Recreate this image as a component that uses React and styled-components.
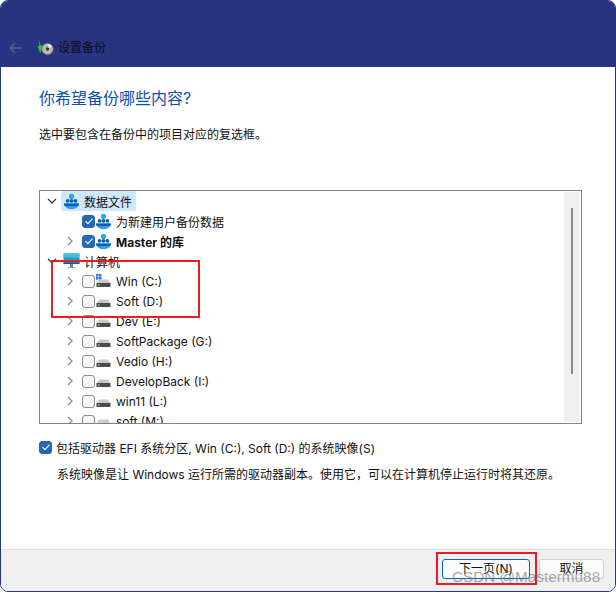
import React from "react";
import styled, { createGlobalStyle } from "styled-components";

const Global = createGlobalStyle`
  html, body { margin: 0; padding: 0; background: #fff; }
  body { font-family: Inter, "Noto Sans CJK SC", sans-serif; font-size: 12px; }
  * { box-sizing: border-box; }
`;

const drives = [
  { name: "Win (C:)", win: true },
  { name: "Soft (D:)" },
  { name: "Dev (E:)" },
  { name: "SoftPackage (G:)" },
  { name: "Vedio (H:)" },
  { name: "DevelopBack (I:)" },
  { name: "win11 (L:)" },
  { name: "soft (M:)" },
];

const Chevron = ({ open, hidden }) => (
  <ChevronBox $hidden={hidden}>
    <svg width="10" height="10" viewBox="0 0 10 10" fill="none" stroke={open ? "#333" : "#8c8c8c"} strokeWidth="1.2">
      <path d={open ? "M1 3l4 4 4-4" : "M3 1l4 4-4 4"} />
    </svg>
  </ChevronBox>
);

const Check = ({ checked }) => (
  <CheckBox $checked={checked}>
    {checked && (
      <svg width="10" height="10" viewBox="0 0 10 10" fill="none" stroke="#fff" strokeWidth="1.1">
        <path d="M1.5 5.2l2.4 2.4 4.6-5" />
      </svg>
    )}
  </CheckBox>
);

const UsersIcon = () => (
  <svg width="17" height="17" viewBox="0 0 17 17">
    <circle cx="8.5" cy="3.4" r="2.6" fill="#2aa6ee" />
    <circle cx="4.6" cy="7.8" r="1.9" fill="#0f5cab" />
    <circle cx="8.5" cy="7.8" r="1.9" fill="#0f5cab" />
    <circle cx="12.4" cy="7.8" r="1.9" fill="#0f5cab" />
    <path d="M1 10.5h15c0 3.4-3.2 5.7-7.5 5.7S1 13.9 1 10.5z" fill="#2aa0e8" />
    <path d="M1 10.5h15c0 1-.3 1.800-.8 2.500H1.800c-.5-.7-.8-1.500-.8-2.500z" fill="#0f5cab" />
  </svg>
);

const MonitorIcon = () => (
  <svg width="17" height="16" viewBox="0 0 17 16">
    <rect x="0.5" y="0.5" width="16" height="10.5" rx="1" fill="#1f9bc4" />
    <rect x="0.5" y="0.5" width="16" height="4" fill="#3fc0dc" />
    <rect x="0.5" y="9.500" width="16" height="1.5" fill="#1a5f80" />
    <rect x="7" y="11" width="3" height="3" fill="#6c8494" />
    <rect x="5" y="14" width="7" height="1" fill="#8fa2ad" />
  </svg>
);

const DriveIcon = ({ win }) => (
  <svg width="17" height="15" viewBox="0 0 17 15">
    {win ? (
      <g fill="#2b7cd3">
        <rect x="1" y="0" width="2.600" height="2.600" />
        <rect x="4" y="0" width="2.600" height="2.600" />
        <rect x="1" y="3" width="2.600" height="2.600" />
        <rect x="4" y="3" width="2.600" height="2.600" />
      </g>
    ) : null}
    <path d="M4 5.500h9l2 3.500H2z" fill="#c9c9c9" />
    <rect x="1.500" y="9" width="14" height="4" fill="#4b4b4b" />
    <rect x="3" y="10.300" width="2" height="1.400" fill="#4fd25a" />
  </svg>
);

const BackupIcon = () => (
  <svg width="17" height="17" viewBox="0 0 17 17">
    <circle cx="10.5" cy="10" r="5.800" fill="#b9b9b9" stroke="#5a5a5a" strokeWidth="0.8" />
    <circle cx="10.5" cy="10" r="1.700" fill="#3a3a3a" />
    <path d="M10.500 4.700a5.300 5.300 0 0 1 4.600 2.800L12 9.300z" fill="#eee" />
    <path d="M2 0l1.600 6.500H6L3.200 14.500 0.600 7h1.700z" fill="#2fc22f" />
  </svg>
);

export default function App() {
  return (
    <>
      <Global />
      <Window>
        <TitleBar>
          <BackArrow>
            <svg width="13" height="12" viewBox="0 0 13 12" fill="none" stroke="#5f6482" strokeWidth="1.3">
              <path d="M12.500 6H1M6 1L1 6l5 5" />
            </svg>
          </BackArrow>
          <BackupIcon />
          <TitleText>设置备份</TitleText>
        </TitleBar>
        <Content>
          <Heading>你希望备份哪些内容?</Heading>
          <Desc>选中要包含在备份中的项目对应的复选框。</Desc>
          <Tree>
            <TreeList>
              <Row $depth={0}>
                <Chevron open />
                <Selected>
                  <UsersIcon />
                  <span>数据文件</span>
                </Selected>
              </Row>
              <Row $depth={1}>
                <Chevron hidden />
                <Check checked />
                <UsersIcon />
                <Label>为新建用户备份数据</Label>
              </Row>
              <Row $depth={1}>
                <Chevron />
                <Check checked />
                <UsersIcon />
                <Label $bold>Master 的库</Label>
              </Row>
              <Row $depth={0}>
                <Chevron open />
                <Plain>
                  <MonitorIcon />
                  <span>计算机</span>
                </Plain>
              </Row>
              {drives.map((d) => (
                <Row $depth={1} key={d.name}>
                  <Chevron />
                  <Check />
                  <DriveIcon win={d.win} />
                  <Label>{d.name}</Label>
                </Row>
              ))}
            </TreeList>
            <Scrollbar>
              <Thumb />
            </Scrollbar>
          </Tree>
          <Option>
            <Check checked />
            <span>包括驱动器 EFI 系统分区, Win (C:), Soft (D:) 的系统映像(S)</span>
          </Option>
          <OptionNote>
            系统映像是让 Windows 运行所需的驱动器副本。使用它，可以在计算机停止运行时将其还原。
          </OptionNote>
        </Content>
        <Footer>
          <Button $primary>下一页(N)</Button>
          <Button>取消</Button>
        </Footer>
        <RedBox $left={50} $top={259} $width={149} $height={58} />
        <RedBox $left={435} $top={551} $width={101} $height={33} />
        <Watermark>CSDN @Mastermu88</Watermark>
      </Window>
    </>
  );
}

const Window = styled.div`
  position: relative;
  width: 616px;
  height: 592px;
  display: flex;
  flex-direction: column;
  border: 1px solid #27347f;
  border-radius: 8px;
  overflow: hidden;
  background: #fff;
  color: #111;
`;

const TitleBar = styled.div`
  height: 66px;
  flex: none;
  background: #27347f;
  display: flex;
  align-items: center;
  padding: 27px 0 0 8px;
  color: #0b0b1c;
`;

const BackArrow = styled.div`
  display: flex;
  width: 28px;
`;

const TitleText = styled.div`
  margin-left: 4px;
  font-size: 12px;
  line-height: 18px;
`;

const Content = styled.div`
  flex: 1;
  padding: 20px 33px 0 38px;
`;

const Heading = styled.h1`
  margin: 0;
  font-size: 16px;
  font-weight: 400;
  line-height: 22px;
  color: #0f4fb0;
`;

const Desc = styled.div`
  margin-top: 17px;
  line-height: 18px;
`;

const Tree = styled.div`
  margin-top: 46px;
  width: 543px;
  height: 234px;
  border: 1px solid #82838a;
  display: flex;
  overflow: hidden;
`;

const TreeList = styled.div`
  flex: 1;
  overflow: hidden;
`;

const Row = styled.div`
  height: 20px;
  display: flex;
  align-items: center;
  padding-left: ${({ $depth }) => 7 + $depth * 18}px;
  white-space: nowrap;
`;

const ChevronBox = styled.span`
  width: 10px;
  height: 10px;
  flex: none;
  display: flex;
  visibility: ${({ $hidden }) => ($hidden ? "hidden" : "visible")};
`;

const CheckBox = styled.span`
  width: 13px;
  height: 13px;
  flex: none;
  margin-left: 7px;
  border-radius: 3px;
  display: flex;
  align-items: center;
  justify-content: center;
  background: ${({ $checked }) => ($checked ? "#2469b8" : "#f7f7f7")};
  border: 1px solid ${({ $checked }) => ($checked ? "#2469b8" : "#8d8d8d")};
`;

const Selected = styled.div`
  margin-left: 4px;
  height: 20px;
  width: 75px;
  padding-left: 2px;
  display: flex;
  align-items: center;
  gap: 4px;
  border-radius: 2px;
  background: #cfe8fb;
`;

const Plain = styled(Selected)`
  background: none;
`;

const Label = styled.span`
  margin-left: 4px;
  font-weight: ${({ $bold }) => ($bold ? 700 : 400)};
`;

const Scrollbar = styled.div`
  width: 16px;
  flex: none;
  margin: 1px 1px 1px 0;
  background: #f0f0f0;
  padding: 16px 0 0 7px;
`;

const Thumb = styled.div`
  width: 2px;
  height: 166px;
  background: #8a8a8a;
`;

const Option = styled.div`
  margin-top: 14px;
  height: 18px;
  display: flex;
  align-items: center;
  gap: 4px;
  white-space: nowrap;
  & > span:first-child {
    margin-left: 0;
  }
`;

const OptionNote = styled.div`
  margin-top: 10px;
  padding-left: 18px;
  line-height: 18px;
  white-space: nowrap;
`;

const Footer = styled.div`
  height: 42px;
  flex: none;
  background: #f0f0f0;
  border-top: 1px solid #dfdfdf;
  display: flex;
  gap: 9px;
  justify-content: flex-end;
  padding: 9px 11px 0 0;
`;

const Button = styled.button`
  width: ${({ $primary }) => ($primary ? 88 : 65)}px;
  height: 20px;
  padding: 0;
  font: inherit;
  line-height: 18px;
  color: #111;
  border-radius: 3px;
  background: #fbfbfb;
  border: 1px solid ${({ $primary }) => ($primary ? "#0067c0" : "#d0d0d0")};
`;

const RedBox = styled.div`
  position: absolute;
  left: ${({ $left }) => $left}px;
  top: ${({ $top }) => $top}px;
  width: ${({ $width }) => $width}px;
  height: ${({ $height }) => $height}px;
  border: 2px solid #ed1c24;
  pointer-events: none;
`;

const Watermark = styled.div`
  position: absolute;
  left: 451px;
  top: 566px;
  font-family: "Liberation Sans", sans-serif;
  font-size: 15.3px;
  line-height: 20px;
  color: rgba(110, 110, 110, 0.6);
  white-space: nowrap;
`;
